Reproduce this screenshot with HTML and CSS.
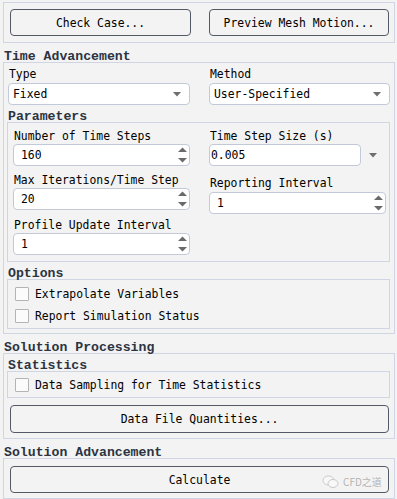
FILE: index.html
```html
<!DOCTYPE html>
<html lang="en">
<head>
  <meta charset="UTF-8">
  <meta name="viewport" content="width=device-width, initial-scale=1.0">
  <title>Run Calculation</title>
  <link rel="stylesheet" href="styles.css">
</head>
<body>
  <div class="toolbar">
    <button class="btn">Check Case...</button>
    <button class="btn">Preview Mesh Motion...</button>
  </div>

  <h3 class="section-title">Time Advancement</h3>
  <div class="group outer">
    <div class="type-row">
      <div class="field">
        <label>Type</label>
        <div class="select">Fixed<svg class="caret" width="8" height="5" viewBox="0 0 8 5"><polygon points="0,0 8,0 4,4.5"/></svg></div>
      </div>
      <div class="field">
        <label>Method</label>
        <div class="select">User-Specified<svg class="caret" width="8" height="5" viewBox="0 0 8 5"><polygon points="0,0 8,0 4,4.5"/></svg></div>
      </div>
    </div>

    <h4 class="group-title">Parameters</h4>
    <div class="group params">
      <div class="col">
        <div class="field">
          <label>Number of Time Steps</label>
          <div class="spin">160<svg class="arrows" width="9" height="16" viewBox="0 0 9 16"><polygon points="0,5 4.5,0.5 9,5"/><polygon points="0,11 9,11 4.5,15.5"/></svg></div>
        </div>
        <div class="field">
          <label>Max Iterations/Time Step</label>
          <div class="spin">20<svg class="arrows" width="9" height="16" viewBox="0 0 9 16"><polygon points="0,5 4.5,0.5 9,5"/><polygon points="0,11 9,11 4.5,15.5"/></svg></div>
        </div>
        <div class="field">
          <label>Profile Update Interval</label>
          <div class="spin">1<svg class="arrows" width="9" height="16" viewBox="0 0 9 16"><polygon points="0,5 4.5,0.5 9,5"/><polygon points="0,11 9,11 4.5,15.5"/></svg></div>
        </div>
      </div>
      <div class="col">
        <div class="field">
          <label>Time Step Size (s)</label>
          <div class="with-caret">
            <div class="text-input">0.005</div>
            <svg class="caret" width="8" height="5" viewBox="0 0 8 5"><polygon points="0,0 8,0 4,4.5"/></svg>
          </div>
        </div>
        <div class="field report">
          <label>Reporting Interval</label>
          <div class="spin">1<svg class="arrows" width="9" height="16" viewBox="0 0 9 16"><polygon points="0,5 4.5,0.5 9,5"/><polygon points="0,11 9,11 4.5,15.5"/></svg></div>
        </div>
      </div>
    </div>

    <h4 class="group-title">Options</h4>
    <div class="group options">
      <div class="check"><span class="box"></span>Extrapolate Variables</div>
      <div class="check"><span class="box"></span>Report Simulation Status</div>
    </div>
  </div>

  <h3 class="section-title">Solution Processing</h3>
  <div class="group processing">
    <h4 class="group-title first">Statistics</h4>
    <div class="group stats">
      <div class="check"><span class="box"></span>Data Sampling for Time Statistics</div>
    </div>
    <button class="btn wide">Data File Quantities...</button>
  </div>

  <h3 class="section-title">Solution Advancement</h3>
  <div class="group advancement">
    <button class="btn calc">Calculate</button>
    <div class="watermark">
      <svg width="17" height="14" viewBox="0 0 17 14">
        <ellipse cx="6.5" cy="5.5" rx="5.5" ry="4.5"/>
        <ellipse cx="11" cy="8.5" rx="5" ry="4"/>
      </svg>
      <span>CFD之道</span>
    </div>
  </div>
</body>
</html>
```

FILE: styles.css
```css
* {
  box-sizing: border-box;
}

body {
  margin: 0;
  width: 397px;
  height: 499px;
  overflow: hidden;
  background: #f3f3f3;
  color: #000;
  font-family: 'DejaVu Sans Mono', 'Liberation Mono', 'Noto Sans CJK SC', monospace;
  font-size: 11.4px;
}

.toolbar {
  margin: 2px 2px 0 3px;
  height: 41px;
  border: 1px solid #cfd5e3;
  display: grid;
  grid-template-columns: 181px 180px;
  column-gap: 18px;
  padding: 6px 0 0 6px;
}

.btn {
  height: 27px;
  margin: 0;
  padding: 0;
  background: #f3f3f3;
  border: 1px solid #535a66;
  border-radius: 4px;
  font-family: inherit;
  font-size: 11.4px;
  color: #000;
}

.section-title,
.group-title {
  height: 11px;
  line-height: 11px;
  font-family: 'Liberation Mono', monospace;
  font-size: 13.2px;
  font-weight: bold;
  color: #2c3442;
}

.section-title {
  margin: 8px 0 0 4px;
}

.group-title {
  margin: 6px 0 0 1px;
}

.group-title.first {
  margin-top: 0;
}

.group {
  border: 1px solid #cfd5e3;
}

.outer {
  margin: 0 2px 0 3px;
  padding: 3px 4px 4px 3px;
}

.type-row {
  display: grid;
  grid-template-columns: 182px 181px;
  column-gap: 19px;
  padding-left: 1px;
}

.type-row label {
  margin-bottom: 3px;
}

label {
  display: block;
  height: 14px;
  line-height: 16px;
  padding-left: 1px;
  margin-bottom: 2px;
}

.select, .spin, .text-input {
  height: 22px;
  background: #fff;
  border: 1px solid #c2c9d8;
  border-radius: 4px;
  display: flex;
  align-items: center;
}

.select {
  justify-content: space-between;
  padding: 0 8px 0 4px;
}

.caret {
  fill: #6e6e6e;
}

.spin {
  justify-content: space-between;
  padding: 0 2px 0 7px;
}

.arrows {
  fill: #6a6a6a;
}

.params {
  display: flex;
  column-gap: 19px;
  padding: 5px 3px 6px 5px;
}

.col {
  width: 177px;
  display: flex;
  flex-direction: column;
  gap: 6px;
}

.col .field:nth-child(3) {
  margin-top: 1px;
}

.col .report {
  margin-top: 3px;
}

.col .report label {
  margin-bottom: 3px;
}

.with-caret {
  display: flex;
  align-items: center;
}

.text-input {
  width: 152px;
  padding-left: 1px;
}

.with-caret .caret {
  margin-left: 8px;
}

.options {
  padding: 3px 0 1px 7px;
}

.check {
  height: 22px;
  display: flex;
  align-items: center;
  gap: 6px;
}

.box {
  width: 14px;
  height: 14px;
  background: #fbfbfb;
  border: 1px solid #b4b4b4;
  border-radius: 1px;
}

.processing {
  margin: 0 2px 0 3px;
  padding: 6px 4px 5px 3px;
}

.stats {
  padding: 2px 0 1px 7px;
}

.wide {
  display: block;
  width: 379px;
  height: 28px;
  margin: 7px 0 0 3px;
}

.advancement {
  position: relative;
  margin: 0 2px 0 3px;
  padding: 7px 4px 5px 6px;
}

.calc {
  display: block;
  width: 379px;
}

.watermark {
  position: absolute;
  left: 318px;
  top: 15px;
  display: flex;
  align-items: center;
  gap: 4px;
  color: #b3b3b3;
  font-family: 'Noto Sans CJK SC', sans-serif;
  font-size: 10px;
}

.watermark svg {
  fill: #f8f8f8;
  stroke: #c9c9c9;
  stroke-width: 1;
}
```
